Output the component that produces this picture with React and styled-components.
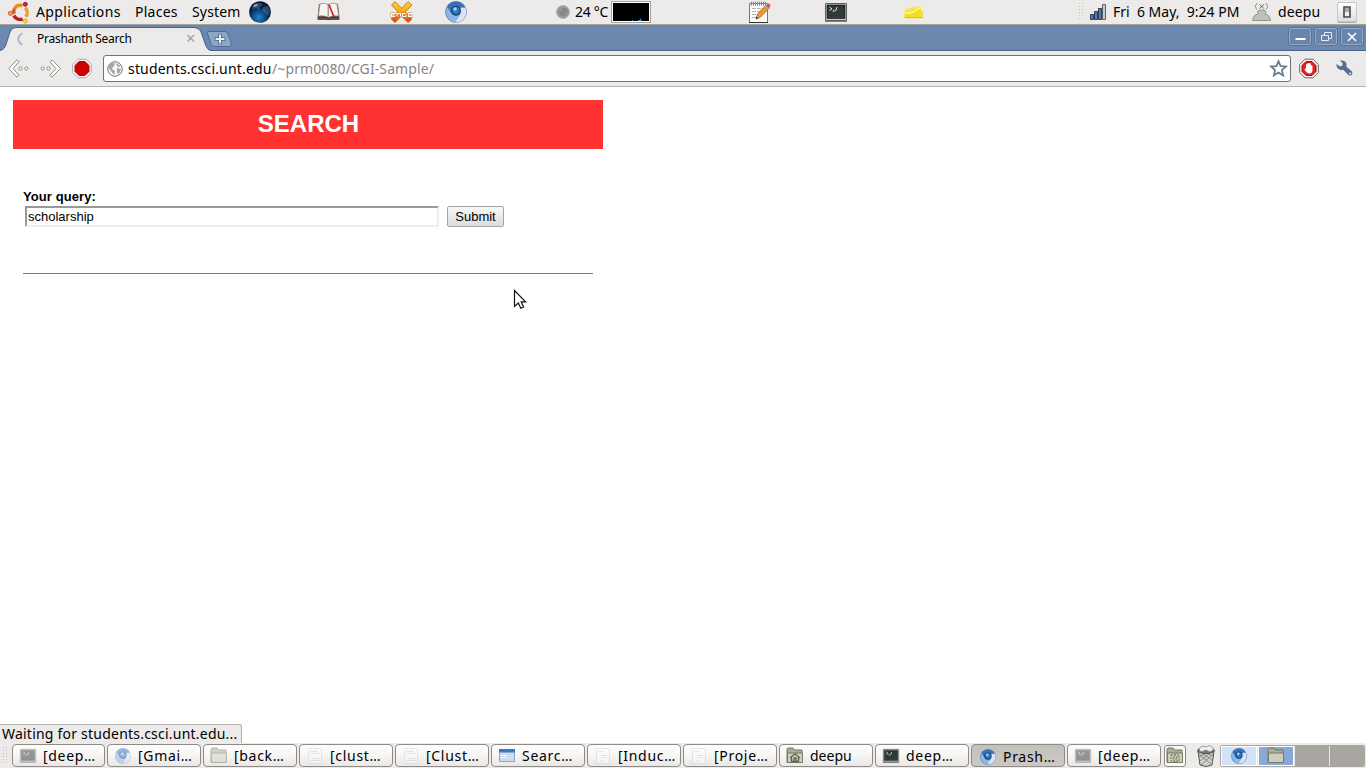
import React from 'react';
import styled, { createGlobalStyle, css } from 'styled-components';

const Global = createGlobalStyle`
  * { box-sizing: border-box; }
  body { margin: 0; background: #fff; overflow: hidden; }
  svg { display: block; flex: none; overflow: visible; }
`;

const Screen = styled.div`
  width: 1366px; height: 768px; display: flex; flex-direction: column;
  font-family: "Noto Sans", "Open Sans", sans-serif; color: #000; position: relative;
`;

const Panel = styled.header`
  height: 25px; flex: none; display: flex; align-items: center;
  background: #edebe9; border-bottom: 1px solid #a6a298;
`;
const Slot = styled.div`
  flex: none; width: ${p => p.$w}px; margin-left: ${p => p.$gap || 0}px;
`;
const Label = styled.span`
  flex: none; display: block; width: ${p => p.$w}px; margin-left: ${p => p.$gap || 0}px;
  font-size: ${p => p.$size || 14}px; line-height: 20px; white-space: pre;
  letter-spacing: ${p => p.$track || 0}px; color: ${p => p.$color || '#000'};
`;
const Meter = styled.div`
  flex: none; width: 40px; height: 22px; margin-left: 3px; border: 1px solid #a5a39e;
  background: #fff; padding: 1px;
`;
const PowerButton = styled.div`
  width: 20px; height: 20px; margin-left: 17px; flex: none; border-radius: 2px;
  border: 1px solid #c9c6c2; background: linear-gradient(#fff, #ddd);
  display: flex; align-items: center; justify-content: center;
  box-shadow: 0 1px 0 #aaa;
`;

const TabStrip = styled.div`
  height: 26px; flex: none; display: flex; align-items: flex-start;
  background: linear-gradient(#6c88ae 25px, #48648c 25px);
`;
const Tab = styled.div`
  width: 210px; height: 26px; flex: none; position: relative;
  display: flex; align-items: center; padding-left: 17px;
`;
const TabShape = styled.svg`
  position: absolute; left: 0; top: 0;
`;
const TabRow = styled.div`
  position: relative; display: flex; align-items: center; height: 27px; padding-top: 1px;
`;
const NewTab = styled.div` margin: 6px 0 0 -3px; `;
const WindowButtons = styled.div`
  margin-left: auto; display: flex; gap: 4px; padding: 3px 3px 0 0;
`;
const WindowButton = styled.div`
  width: 22px; height: 17px; border: 1px solid #92a9cb; border-radius: 2px;
  background: #6985ac; display: flex; align-items: center; justify-content: center;
  outline: 1px solid #587397;
`;

const Toolbar = styled.div`
  height: 36px; flex: none; display: flex; align-items: center;
  background: #edebe9; border-bottom: 1px solid #b6b4b1; padding-left: 8px;
`;
const Omnibox = styled.div`
  width: 1188px; height: 27px; margin-left: 11px; flex: none; display: flex; align-items: center;
  background: #fff; border: 1px solid #727272; border-radius: 3px; padding: 0 3px;
`;
const Spacer = styled.div` flex: 1; `;

const Page = styled.main`
  height: 656px; flex: none; padding: 13px 0 0 13px; position: relative;
  font-family: "Liberation Sans", Arial, sans-serif; font-size: 13px;
`;
const Sheet = styled.section` width: 590px; `;
const Banner = styled.h1`
  margin: 0; height: 49px; line-height: 48px; background: #ff3131; color: #fff;
  font-size: 24px; text-align: center; padding-left: 1px;
`;
const Form = styled.div`
  margin: 0 10px; padding-top: 40px; height: 125px; border-bottom: 1px solid #7c7c7c;
`;
const Caption = styled.div`
  font-weight: bold; line-height: 15px; height: 17px; letter-spacing: 0.08px;
`;
const Row = styled.div` display: flex; padding-left: 2px; `;
const QueryInput = styled.input`
  width: 414px; height: 21px; border: 2px solid; border-color: #999 #eee #eee #999;
  padding: 0 1px; font: 13px "Liberation Sans", Arial, sans-serif; outline: none; color: #000;
  background: #fff; border-radius: 0;
`;
const Submit = styled.button`
  width: 57px; height: 21px; margin-left: 8px; padding: 0; border: 1px solid #a5a5a5;
  border-radius: 2px; background: linear-gradient(#f8f8f8, #dcdcdc); color: #000;
  font: 13px/18px "Liberation Sans", Arial, sans-serif;
`;
const Pointer = styled.div` position: absolute; left: 513px; top: 202px; `;
const Status = styled.div`
  position: absolute; left: 0; bottom: 0; width: 242px; height: 19px; background: #edebe9;
  border: 1px solid #b3b1ae; border-left: 0; border-bottom: 0; border-radius: 0 3px 0 0;
  padding-left: 2px; font-family: "Noto Sans", sans-serif; display: flex; align-items: center;
`;

const Taskbar = styled.footer`
  height: 25px; flex: none; display: flex; align-items: center; background: #edebe9;
`;
const Grip = styled.div`
  flex: none; width: 3px; height: 18px;
  background: repeating-linear-gradient(#c3c0bc 0 1px, transparent 1px 3px) 0 0 / 1px 100% no-repeat;
`;
const Grips = styled.div` display: flex; width: ${p => p.$w}px; margin-left: ${p => p.$gap || 0}px; flex: none; `;
const Task = styled.div`
  width: 94px; height: 23px; margin-right: 2px; flex: none; border: 1px solid #8f8c88;
  border-radius: 4px; display: flex; align-items: center; padding-left: 6px;
  background: linear-gradient(#fdfdfd, #f7f6f5 50%, #e9e7e5);
  &:nth-child(2) { width: 93px; }
  ${p => p.$active && css`background: linear-gradient(#c4c1bd, #cbc8c5); padding-top: 2px; padding-left: 7px;`}
`;
const TaskIcon = styled.div`
  flex: none; width: 18px; display: flex; justify-content: center; opacity: ${p => (p.$dim ? 0.5 : 1)};
`;
const MiniButton = styled.div`
  width: 22px; height: 22px; margin-left: 1px; flex: none; border: 1px solid #8f8c88;
  border-radius: 3px; background: #f9f8f7; display: flex; align-items: center; justify-content: center;
`;
const Pager = styled.div`
  width: 145px; height: 22px; margin-left: 4px; flex: none; display: flex; gap: 1px;
  background: #e9e7e5; border-radius: 2px; overflow: hidden; border: 1px solid #a8a49f;
`;
const Desk = styled.div`
  flex: 1; background: ${p => p.$bg || '#a8a4a0'}; display: flex; align-items: center; justify-content: center;
  border: ${p => (p.$bg ? '1px solid #fff' : '0')};
`;

const GripDots = ({ w, gap }) => (
  <Grips $w={w} $gap={gap}><Grip /><Grip /></Grips>
);

const UbuntuIcon = () => (
  <svg width="22" height="23" viewBox="0 0 22 23" fill="none">
    <path d="M6.5 7.5A7 7 0 0 1 14.5 4.8" stroke="#e89022" strokeWidth="3.4" />
    <path d="M17.2 6.7A7 7 0 0 1 17.8 15.8" stroke="#e8a126" strokeWidth="3.4" />
    <path d="M5.8 14.5A7 7 0 0 0 14.7 18" stroke="#b92020" strokeWidth="3.4" />
    <path d="M6.5 7.5A7 7 0 0 0 6 13" stroke="#e55722" strokeWidth="3.4" />
    <circle cx="17.3" cy="3.3" r="2" fill="#ca2451" stroke="#9c1845" />
    <circle cx="2.4" cy="12.3" r="2.1" fill="#f29b70" stroke="#e26036" />
    <circle cx="17.4" cy="20" r="2" fill="#ffd943" stroke="#d9aa22" />
  </svg>
);
const Globe = () => (
  <svg width="22" height="22" viewBox="0 0 22 22">
    <defs><radialGradient id="gl" cx=".45" cy=".75"><stop stopColor="#2584cd" /><stop offset=".6" stopColor="#114784" /><stop offset="1" stopColor="#061735" /></radialGradient></defs>
    <circle cx="11" cy="11" r="10.8" fill="url(#gl)" />
    <path d="M3 5L7 1.8L12 2L14 4L11 6L10 9L7 7L3 9ZM14 6L19 5L21 10L19 15L16 12L13 10Z" fill="#4d9dc8" opacity=".4" />
    <path d="M5 4L9 3L8 5L5 6Z" fill="#d6efeb" opacity=".7" />
  </svg>
);
const Book = () => (
  <svg width="23" height="18" viewBox="0 0 23 18">
    <path d="M2 1H21L22.5 14.5V17H.5V14Z" fill="#665451" />
    <path d="M3 .8Q8-.5 11 1.5Q15-.5 20 .8L21.7 13Q15 12 11.5 15Q8 12 1.3 13Z" fill="#f5f4ef" stroke="#868381" strokeWidth=".7" />
    <path d="M11.2 1.8V14" stroke="#7d7976" /><path d="M12 1.5Q14 7 17 14" stroke="#d62027" strokeWidth="1.7" fill="none" />
    <path d="M1 14.5H10L11.5 16L13 14.5H22" stroke="#4a3b3a" strokeWidth="1.6" fill="none" />
  </svg>
);
const XIcon = () => (
  <svg width="23" height="22" viewBox="0 0 23 22">
    <defs><linearGradient id="xg" x2="0" y2="1"><stop stopColor="#ffd22b" /><stop offset=".5" stopColor="#ffa710" /><stop offset="1" stopColor="#e92d0b" /></linearGradient></defs>
    <path d="M1.5 4L5 .7L11.6 7.2L18 .7L22 4L15.2 11L22 18L18 21.5L11.5 15L5 21.5L1.2 18L8.2 11Z" fill="url(#xg)" stroke="#a86b10" strokeWidth=".8" />
    <path d="M5.5 12.5H1.5V15.5H5M2 14H5M7 15.5V12.5H10.5V15.5M16 12.5H12.5V15.5H16V14M22 12.5H18.5V15.5H22V14" fill="none" stroke="#b97c3a" strokeWidth="1.8" />
    <path d="M5.5 12.5H1.5V15.5H5M2 14H5M7 15.5V12.5H10.5V15.5M16 12.5H12.5V15.5H16V14M22 12.5H18.5V15.5H22V14" fill="none" stroke="#fff" strokeWidth="1.1" />
  </svg>
);
const Chromium = ({ size = 22 }) => (
  <svg width={size} height={size} viewBox="0 0 22 22">
    <circle cx="11" cy="11" r="10.5" fill="#6f9ed8" stroke="#5c82b7" strokeWidth=".8" />
    <path d="M2 5.4A10.6 10.6 0 0 1 20.4 6.4H11L6.3 12Z" fill="#3c6fbb" />
    <path d="M20.4 6.5A10.6 10.6 0 0 1 10 21.4L15.4 13L15 7Z" fill="#dce4ef" />
    <path d="M10 21.4L15 13L12 15L6.5 13L2 6Q-1 13 5 19Q7 21 10 21.4" fill="#8bb6e8" />
    <circle cx="11" cy="9.7" r="5" fill="#1c3760" /><circle cx="11" cy="9.5" r="3.8" fill="#257cc9" /><circle cx="10" cy="8" r="1.8" fill="#90d5f4" />
  </svg>
);
const Moon = () => (
  <svg width="14" height="14" viewBox="0 0 14 14"><circle cx="7" cy="7" r="6.5" fill="#979797" stroke="#b5b5b5" /><circle cx="7.5" cy="7" r="4" fill="#878787" /><path d="M4 4H6V6H4ZM9 8H11V10H9Z" fill="#999" /></svg>
);
const Load = () => (
  <svg width="36" height="18" viewBox="0 0 36 18"><path fill="#000" d="M0 0H36V18H0Z" /><path d="M19 18V17H20V18M25 18V17H27V15.5H28V17H29V18" fill="#2490dc" /></svg>
);
const Notepad = () => (
  <svg width="22" height="22" viewBox="0 0 22 22">
    <path d="M.5 2.5H18.5V21.5H.5Z" fill="#fafafa" stroke="#777" /><path d="M0 21.5H19" stroke="#333" />
    <path d="M2 2.8H17" stroke="#888" strokeWidth="4" strokeDasharray="1 1" />
    <path d="M3 7.5H14M3 10.5H12M3 13.5H9M3 16.5H8" stroke="#b4b4b4" strokeDasharray="4 1" />
    <path d="M7 18L8.5 13L17 4.2L20.3 7L11 16.5Z" fill="#ee9a32" stroke="#945410" strokeWidth=".7" />
    <path d="M17 4.3L19 2.6Q21.5 2 21.5 5L20.3 7Z" fill="#df5661" /><path d="M16.2 5L19.5 8" stroke="#aaa" strokeWidth="1.5" /><path d="M7 18L7.6 15.7L9 17.2Z" fill="#222" />
  </svg>
);
const Terminal = ({ w = 22, h = 19 }) => (
  <svg width={w} height={h} viewBox="0 0 22 19" preserveAspectRatio="none">
    <path d="M.5.5H21.5V17.5H.5Z" fill="#c8c9c6" stroke="#5d605b" /><path d="M0 18.3H22" stroke="#666" />
    <path d="M2 2H20V15.5H2Z" fill="#2a3432" stroke="#111" strokeWidth=".6" />
    <path d="M3 6.5H19M3 9H19M3 11.5H19M3 14H19" stroke="#3f4c49" strokeWidth=".7" />
    <path d="M4.5 4L7 5.8L4.5 7.5M7.5 8H10M12 4L10.5 8" stroke="#e4e8e4" fill="none" />
  </svg>
);
const Notes = () => (
  <svg width="20" height="14" viewBox="0 0 20 14"><path d="M2 4L17 .8V8H19V13H.5V7Z" fill="#f7e33d" /><path d="M.5 7L17 2V6H19V13H.5Z" fill="#f2dc25" stroke="#fff15b" strokeWidth=".6" /><path d="M1 8Q9 9 17 2" stroke="#fff8a8" strokeWidth="1.4" fill="none" /><path d="M.5 12.6H19" stroke="#dac21c" /></svg>
);
const Signal = () => (
  <svg width="17" height="16" viewBox="0 0 17 16"><path d="M.5 10.5H3.5V15.5H.5ZM4.5 7.5H7.5V15.5H4.5ZM8.5 4.5H11.5V15.5H8.5Z" fill="#537bb8" stroke="#333c49" /><path d="M12.5.5H15.5V15.5H12.5Z" fill="#c5c8c9" stroke="#60625f" /></svg>
);
const UserIcon = () => (
  <svg width="20" height="20" viewBox="0 0 20 20" fill="none"><path d="M.6 18.5C1 14 3 12.5 6.5 12Q4.5 10 6 9Q10 6.5 13.5 9Q15 10 13 12Q18 13 18.5 18.5Z" fill="#c0c0ba" stroke="#95968f" /><path d="M5 1Q2 4 4.5 7.5M14 1Q17 4 14.5 7.5" stroke="#888" strokeWidth=".9" /><path d="M7.5 2.2L12 6.7M12 2.2L7.5 6.7" stroke="#555" strokeWidth=".9" /></svg>
);
const BackArrow = ({ flip }) => (
  <svg width="21" height="20" viewBox="0 0 21 20"><g transform={flip ? 'translate(21 0) scale(-1 1)' : undefined} fill="#fff" stroke="#8b8b88" strokeLinejoin="round"><path d="M.7 9.5L9 .8L11 2.8L5 9.5L11 16.2L9 18.2Z" /><circle cx="12.5" cy="9.5" r="1.6" /><circle cx="18.3" cy="9.5" r="1.6" /></g></svg>
);
const Stop = ({ hand }) => (
  <svg width="20" height="20" viewBox="0 0 20 20">
    <path d="M6 .2H14L19.3 5.5V13.5L14 18.8H6L.7 13.5V5.5Z" fill="#fafafa" stroke={hand ? '#666' : '#aaa'} />
    <path d="M7 2.5H13L17 6.5V12.5L13 16.5H7L3 12.5V6.5Z" fill={hand ? '#e32124' : '#cf0000'} stroke="#a90808" />
    {hand && <path d="M7 9.5V5.5Q8 4.5 8.5 5.5V8.5V4.5Q9.5 3.5 10 4.5V8.5V4.5Q11.2 3.5 11.7 5V9.5V6.5Q13.5 5.5 13.5 7.5V11.5Q13 14.5 10.5 14.5Q8 14.5 5.5 10.5Q6 9 7 9.5Z" fill="#fff" />}
  </svg>
);
const SiteGlobe = () => (
  <svg width="16" height="16" viewBox="0 0 16 16"><circle cx="8" cy="8" r="7.3" fill="#f8f8f8" stroke="#777" /><path d="M3 3L7 1.5L8 3L6 6L5 8L8 10L7 14L4 10L1.5 7ZM9 2L14 5L12 6L10 5ZM10 7L14 8L12 13L10 12Z" fill="#a6a6a6" /></svg>
);
const Star = () => (
  <svg width="18" height="18" viewBox="0 0 18 18"><path d="M9.5 1.2L11.6 6.1L17 6.5L12.9 10.1L14.2 15.5L9.5 12.6L4.8 15.5L6.1 10.1L2 6.5L7.4 6.1Z" fill="#fff" stroke="#69788d" strokeWidth="1.7" /></svg>
);
const Wrench = () => (
  <svg width="17" height="17" viewBox="0 0 17 17"><path d="M.5 4L4.2 6.5L6.5 5.5L6.5 3L3.8.8Q8-.3 10.2 2.7Q11 5 10.2 6.5L16 11.5Q17 13.5 15.5 15Q14 16 12.5 15L7.2 9.8Q4 11 1.4 8Q.2 6.5 .5 4Z" fill="#566d8e" /><circle cx="14.1" cy="13.4" r="1" fill="#edebe9" /></svg>
);
const Folder = ({ mark }) => (
  <svg width="18" height="17" viewBox="0 0 18 17"><path d="M1 15.5V2.5L2 1H7L8.5 3H16V15.5Z" fill="#aaae96" stroke="#72765f" /><path d="M1.5 6H16.5V15.5H1.5Z" fill="#cdcfbc" stroke="#777b66" />
    {mark === 'home' && <path d="M4 11L9 6.8L14 11M5.5 10.5V14.5H12.5V10.5M8 14V11H10V14" fill="none" stroke="#5e624f" strokeWidth="1.3" />}
    {mark === 'desk' && <path d="M5 8H13V14H5ZM7 10H11V12H7ZM9 6.8V8M9 14V15.5" fill="none" stroke="#6c705c" strokeDasharray="2 1" />}
  </svg>
);
const Doc = ({ kind }) => (
  <svg width="14" height="16" viewBox="0 0 14 16"><path d="M.5.5H13.5V15.5H.5Z" fill="#fbfbfb" stroke="#d4d4d4" />
    <path d={kind === 'pdf' ? 'M3 3.5H7M5 7.5H12M5 9.5H10M5 12.5H7' : 'M2 3.5H10M2 5.5H12M4 10.5H12M2 12.5H12'} stroke="#cfcfcf" /></svg>
);
const WindowIcon = () => (
  <svg width="16" height="13" viewBox="0 0 16 13"><path d="M.5.5H15.5V12.5H.5Z" fill="#cfdcef" stroke="#8ca5c8" /><path d="M0 0H16V3.5H0Z" fill="#3979c6" /><path d="M2 6.5H8M2 8.5H7" stroke="#fff" /></svg>
);
const Trash = () => (
  <svg width="20" height="22" viewBox="0 0 20 22"><path d="M2 6L4 20Q10 23 16 20L18 6Z" fill="#d1d2ce" stroke="#555753" /><path d="M3 9L16 20M5 7L17 16M9 7L18 12M17 9L5 20M14 8L4 16M10 8L3 12" stroke="#777" strokeWidth=".8" /><ellipse cx="10" cy="5.5" rx="8.5" ry="3" fill="#777" stroke="#555" /><path d="M3 4L6 1L10 2L14 .5L18 4L14 7L10 5L5 7Z" fill="#efefed" stroke="#888" strokeWidth=".8" /></svg>
);

const tasks = [
  { name: '[deep…', icon: <Terminal w={16} h={14} />, dim: true },
  { name: '[Gmai…', icon: <Chromium size={16} />, dim: true },
  { name: '[back…', icon: <Folder />, dim: true },
  { name: '[clust…', icon: <Doc />, dim: true },
  { name: '[Clust…', icon: <Doc />, dim: true },
  { name: 'Searc…', icon: <WindowIcon /> },
  { name: '[Induc…', icon: <Doc kind="pdf" />, dim: true },
  { name: '[Proje…', icon: <Doc kind="pdf" />, dim: true },
  { name: 'deepu', icon: <Folder mark="home" />, track: 0 },
  { name: 'deep…', icon: <Terminal w={16} h={14} /> },
  { name: 'Prash…', icon: <Chromium size={16} />, active: true },
  { name: '[deep…', icon: <Terminal w={16} h={14} />, dim: true },
];

export default function App() {
  return (
    <Screen>
      <Global />
      <Panel>
        <Slot $w={22} $gap={8}><UbuntuIcon /></Slot>
        <Label $w={85} $gap={6} $track={0.36}>Applications</Label>
        <Label $w={43} $gap={14} $track={0.25}>Places</Label>
        <Label $w={49} $gap={14} $track={0.15}>System</Label>
        <Slot $w={22} $gap={8}><Globe /></Slot>
        <Slot $w={23} $gap={46}><Book /></Slot>
        <Slot $w={23} $gap={50}><XIcon /></Slot>
        <Slot $w={22} $gap={32}><Chromium /></Slot>
        <Slot $w={14} $gap={89}><Moon /></Slot>
        <Label $w={33} $gap={5} $track={-0.3}>24 °C</Label>
        <Meter><Load /></Meter>
        <Slot $w={22} $gap={98}><Notepad /></Slot>
        <Slot $w={22} $gap={54}><Terminal /></Slot>
        <Slot $w={20} $gap={57}><Notes /></Slot>
        <GripDots w={10} gap={155} />
        <Slot $w={17} $gap={1}><Signal /></Slot>
        <Label $w={126} $gap={6}>Fri  6 May,  9:24 PM</Label>
        <Slot $w={20} $gap={13}><UserIcon /></Slot>
        <Label $w={42} $gap={6} $track={0.1}>deepu</Label>
        <PowerButton>
          <svg width="8" height="12" viewBox="0 0 8 12"><path d="M1 1H7V11H1Z" fill="#eee" stroke="#444" strokeWidth="1.6" /><path d="M2 2H6V6H2Z" fill="#aaa" /></svg>
        </PowerButton>
      </Panel>

      <TabStrip>
        <Tab>
          <TabShape width="210" height="27" viewBox="0 0 210 27">
            <path d="M0 27V26Q4 25 5.5 21L10 7Q12 2.5 17 2.5H193Q199 2.5 201 7L206 21Q208 25.5 211 25.5V27Z" fill="#edebe9" />
            <path d="M0 25.5Q4 24.5 5.5 21L10 7Q12 2.5 17 2.5H193Q199 2.5 201 7L206 21Q208 25.5 211 25.5" fill="none" stroke="#48648c" />
          </TabShape>
          <TabRow>
            <svg width="9" height="14" viewBox="0 0 9 14"><path d="M5.5 1Q-3 7 5.5 13" fill="none" stroke="#a9b8cd" strokeWidth="2" /></svg>
            <Label $w={149} $gap={11} $size={12} $track={-0.26}>Prashanth Search</Label>
            <svg width="9" height="9" viewBox="0 0 9 9"><path d="M1.5 1L8 7.5M8 1L1.5 7.5" stroke="#a6a6a6" strokeWidth="1.5" /></svg>
          </TabRow>
        </Tab>
        <NewTab>
          <svg width="26" height="16" viewBox="0 0 26 16"><path d="M1 .5H18Q20 .5 21 3L24.5 13Q25 15.5 22 15.5H8Q5 15.5 4 13L.7 3Q0 .5 1 .5Z" fill="#8ea5c6" stroke="#4e6b94" /><path d="M13 4.5V11.5M9.5 8H16.5" stroke="#49658e" strokeWidth="3.6" strokeLinecap="square" /><path d="M13 3.5V12.5M8.5 8H17.5" stroke="#e9eff7" strokeWidth="2" /></svg>
        </NewTab>
        <WindowButtons>
          <WindowButton><svg width="11" height="11"><path d="M.5 8H10.5" stroke="#fff" strokeWidth="2" /></svg></WindowButton>
          <WindowButton><svg width="11" height="11" fill="#6985ac" stroke="#e5ecf5"><path d="M3.5 1.5H10.5V7.5H3.5Z" /><path d="M.5 4.5H7.5V9.5H.5Z" /></svg></WindowButton>
          <WindowButton><svg width="10" height="10"><path d="M1 1L9 9M9 1L1 9" stroke="#f5f7fb" strokeWidth="1.7" /></svg></WindowButton>
        </WindowButtons>
      </TabStrip>

      <Toolbar>
        <BackArrow />
        <Slot $w={21} $gap={11}><BackArrow flip /></Slot>
        <Slot $w={20} $gap={11}><Stop /></Slot>
        <Omnibox>
          <SiteGlobe />
          <Label $w={144} $gap={5} $track={0.18}>students.csci.unt.edu</Label>
          <Label $w={163} $color="#858585" $track={0.1}>/~prm0080/CGI-Sample/</Label>
          <Spacer />
          <Slot $w={18}><Star /></Slot>
        </Omnibox>
        <Slot $w={20} $gap={8}><Stop hand /></Slot>
        <Slot $w={17} $gap={17}><Wrench /></Slot>
      </Toolbar>

      <Page>
        <Sheet>
          <Banner>SEARCH</Banner>
          <Form>
            <Caption>Your query:</Caption>
            <Row>
              <QueryInput defaultValue="scholarship" />
              <Submit>Submit</Submit>
            </Row>
          </Form>
        </Sheet>
        <Pointer>
          <svg width="14" height="21" viewBox="0 0 14 21"><path d="M1.5 1.5V17.5L5.3 14L7.8 19.3L10.6 18L8.2 12.8H12.6Z" fill="#fff" stroke="#111" strokeWidth="1.2" /></svg>
        </Pointer>
        <Status><Label $w={236} $track={0.22}>Waiting for students.csci.unt.edu...</Label></Status>
      </Page>

      <Taskbar>
        <GripDots w={9} gap={3} />
        {tasks.map((t, i) => (
          <Task key={i} $active={t.active}>
            <TaskIcon $dim={t.dim}>{t.icon}</TaskIcon>
            <Label $w={60} $gap={6} $track={t.track ?? 0.7}>{t.name}</Label>
          </Task>
        ))}
        <MiniButton><Folder mark="desk" /></MiniButton>
        <Slot $w={20} $gap={10}><Trash /></Slot>
        <Pager>
          <Desk $bg="#d2e2f7"><Chromium size={16} /></Desk>
          <Desk $bg="#87a9d7"><Folder /></Desk>
          <Desk />
          <Desk />
        </Pager>
      </Taskbar>
    </Screen>
  );
}
